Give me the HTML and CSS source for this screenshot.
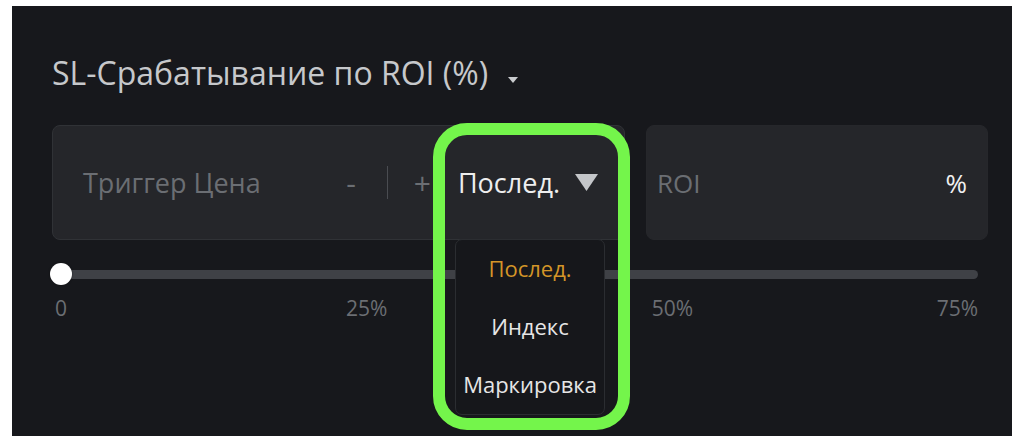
FILE: index.html
```html
<!DOCTYPE html>
<html lang="ru">
<head>
<meta charset="utf-8">
<title>SL-Срабатывание по ROI</title>
<link rel="stylesheet" href="styles.css">
</head>
<body>
<div class="panel">
  <div class="title">SL-Срабатывание по ROI (%)<svg class="title-caret" width="10" height="6" viewBox="0 0 10 6"><path d="M0 0 H10 L5 6 Z" fill="#c9cbce"/></svg></div>
  <div class="inputs">
    <div class="field field-price">
      <span class="placeholder grow">Триггер Цена</span>
      <span class="step minus">-</span>
      <span class="divider"></span>
      <span class="step plus">+</span>
      <span class="select">Послед.</span>
      <svg class="select-caret" width="23" height="17" viewBox="0 0 23 17"><path d="M0 0 H23 L11.5 17 Z" fill="#c4c6c9"/></svg>
    </div>
    <div class="field field-roi">
      <span class="placeholder">ROI</span>
      <span class="unit">%</span>
    </div>
  </div>
  <div class="slider">
    <div class="track"><span class="knob"></span></div>
  </div>
  <div class="marks">
    <span class="mark" style="left:0%">0</span>
    <span class="mark" style="left:33.333%">25%</span>
    <span class="mark" style="left:66.667%">50%</span>
    <span class="mark mark-last" style="left:100%">75%</span>
  </div>
  <div class="menu">
    <div class="menu-item active">Послед.</div>
    <div class="menu-item">Индекс</div>
    <div class="menu-item">Маркировка</div>
  </div>
  <div class="highlight"></div>
</div>
</body>
</html>
```
FILE: styles.css
```css
html, body {
  margin: 0;
  padding: 0;
  background: #ffffff;
}
body {
  font-family: "Open Sans", "Noto Sans", sans-serif;
  overflow: hidden;
}
.panel {
  position: relative;
  box-sizing: border-box;
  margin: 6px 12px 0;
  width: 1000px;
  height: 430px;
  background: #17181c;
  padding: 48px 24px 0 40px;
}
.title {
  font-size: 32px;
  line-height: 38px;
  color: #c6c8cb;
  white-space: nowrap;
}
.title-caret {
  margin-left: 20px;
  vertical-align: 2px;
}
.inputs {
  display: flex;
  gap: 21px;
  height: 115px;
  margin-top: 33px;
}
.field {
  box-sizing: border-box;
  display: flex;
  align-items: center;
  background: #25262a;
  border: 1px solid #303236;
  border-radius: 8px;
  font-size: 27px;
  line-height: 32px;
}
.field-price {
  width: 573px;
  padding: 0 26px 0 30px;
}
.field-roi {
  flex: 1;
  justify-content: space-between;
  padding: 0 20px 0 10px;
  border-color: #26272b;
  font-size: 26px;
}
.placeholder {
  color: #6b6e73;
}
.grow {
  flex: 1;
}
.step {
  color: #6b6e73;
  font-size: 30px;
}
.minus {
  margin-right: 31px;
}
.divider {
  width: 1px;
  height: 33px;
  background: #4a4c51;
}
.plus {
  margin-left: 26px;
  margin-right: 27px;
}
.select {
  color: #eeeeee;
}
.select-caret {
  margin-left: 15px;
}
.unit {
  color: #f0f0f0;
}
.slider {
  margin: 30px 10px 0 0;
}
.track {
  position: relative;
  height: 9px;
  border-radius: 5px;
  background: #3f4146;
}
.knob {
  position: absolute;
  left: -2px;
  top: -7px;
  width: 22px;
  height: 22px;
  border-radius: 50%;
  background: #ffffff;
  box-shadow: 0 0 2px rgba(0, 0, 0, 0.5);
}
.marks {
  position: relative;
  height: 24px;
  margin: 17px 10px 0 9px;
  font-size: 21px;
  line-height: 24px;
  color: #6b6e73;
}
.mark {
  position: absolute;
  top: 0;
  transform: translateX(-50%);
}
.mark-last {
  transform: translateX(-100%);
}
.menu {
  position: absolute;
  left: 443px;
  top: 233px;
  box-sizing: border-box;
  width: 150px;
  height: 176px;
  background: #16171b;
  border: 1px solid #2b2d31;
  border-radius: 7px;
  font-size: 22px;
}
.menu-item {
  box-sizing: border-box;
  height: 58px;
  padding-bottom: 2px;
  display: flex;
  align-items: center;
  justify-content: center;
  color: #e6e6e6;
  white-space: nowrap;
}
.menu-item.active {
  color: #d39528;
}
.highlight {
  position: absolute;
  left: 421px;
  top: 117px;
  box-sizing: border-box;
  width: 197px;
  height: 307px;
  border: 12px solid #74f54b;
  border-radius: 34px;
  pointer-events: none;
}
```
